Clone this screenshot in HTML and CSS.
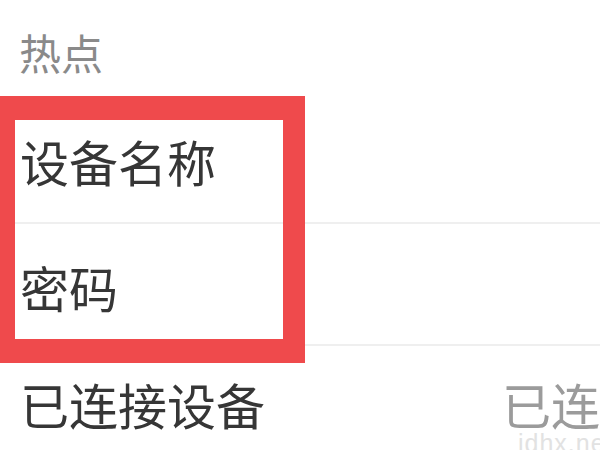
FILE: index.html
```html
<!DOCTYPE html>
<html lang="zh-CN">
<head>
<meta charset="utf-8">
<title>热点</title>
<link rel="stylesheet" href="styles.css">
</head>
<body>
<div class="page">
  <div class="section-title">热点</div>
  <div class="row row-first"><span class="label">设备名称</span></div>
  <div class="row row-second"><span class="label">密码</span></div>
  <div class="row row-third"><span class="label">已连接设备</span><span class="value">已连接</span></div>
  <div class="highlight"></div>
  <div class="watermark">jdhx.net</div>
</div>
</body>
</html>
```
FILE: styles.css
```css
html, body {
  margin: 0;
  padding: 0;
  background: #ffffff;
}
.page {
  position: relative;
  width: 600px;
  height: 450px;
  overflow: hidden;
  font-family: "Noto Sans CJK SC", "Noto Sans", sans-serif;
  font-weight: 400;
}
.section-title {
  height: 100px;
  box-sizing: border-box;
  padding-left: 19px;
  padding-top: 22px;
  font-size: 42px;
  line-height: 60px;
  color: #8a8a8a;
}
.row {
  display: grid;
  grid-template-columns: 482px auto;
  align-items: center;
  box-sizing: border-box;
  padding-left: 20px;
  border-bottom: 2px solid #efefef;
  white-space: nowrap;
}
.row-first {
  height: 124px;
  padding-top: 0;
}
.row-second {
  height: 122px;
  padding-top: 6px;
}
.row-third {
  height: 110px;
  padding-top: 6px;
  border-bottom: none;
}
.label {
  font-size: 49px;
  line-height: 60px;
  color: #363636;
}
.value {
  font-size: 49px;
  line-height: 60px;
  color: #9b9b9b;
}
.highlight {
  position: absolute;
  left: 0;
  top: 96px;
  width: 305px;
  height: 267px;
  box-sizing: border-box;
  border-style: solid;
  border-color: #ef4a4c;
  border-width: 24px 22px 24px 15px;
}
.watermark {
  position: absolute;
  left: 518px;
  top: 429px;
  font-family: "Liberation Sans", Arial, sans-serif;
  font-size: 25px;
  line-height: 28px;
  letter-spacing: 1px;
  color: #e2e2e2;
  white-space: nowrap;
}
```
